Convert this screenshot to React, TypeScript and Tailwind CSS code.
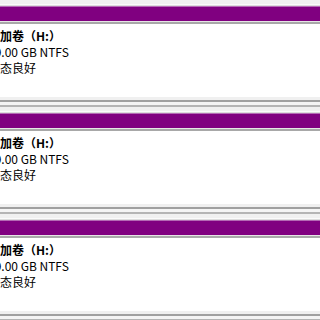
const VOLUMES = [0, 1, 2];

function VolumeBlock() {
  return (
    <div className="flex flex-col">
      <div className="h-[4px] bg-[#f0f0f0]" />
      <div className="h-[1px] bg-[#fafafa]" />
      <div className="h-[1px] bg-[#dcdcdc]" />
      <div className="h-[1px] bg-[#b46ab4]" />
      <div className="h-[14px] bg-[#800080]" />
      <div className="h-[1px] bg-[#e6e6e6]" />
      <div className="h-[2px] bg-[#a8a8a8]" />
      <div className="h-[73px] bg-white pt-[4px]">
        <div className="ml-[-12px] text-[12px] leading-[16px] text-black whitespace-nowrap">
          <div className="font-bold">新加卷（H:）</div>
          <div>59.00 GB NTFS</div>
          <div>状态良好</div>
        </div>
      </div>
      <div className="h-[3px] bg-[#f0f0f0]" />
      <div className="h-[2px] bg-[#a0a0a0]" />
      <div className="h-[3px] bg-[#f4f4f4]" />
      <div className="h-[2px] bg-[#b4b4b4]" />
    </div>
  );
}

export default function App() {
  return (
    <div
      className="w-[320px] h-[320px] overflow-hidden bg-[#f0f0f0]"
      style={{ fontFamily: '"Noto Sans CJK SC", "Noto Sans", sans-serif' }}
    >
      {VOLUMES.map((v) => (
        <VolumeBlock key={v} />
      ))}
    </div>
  );
}
